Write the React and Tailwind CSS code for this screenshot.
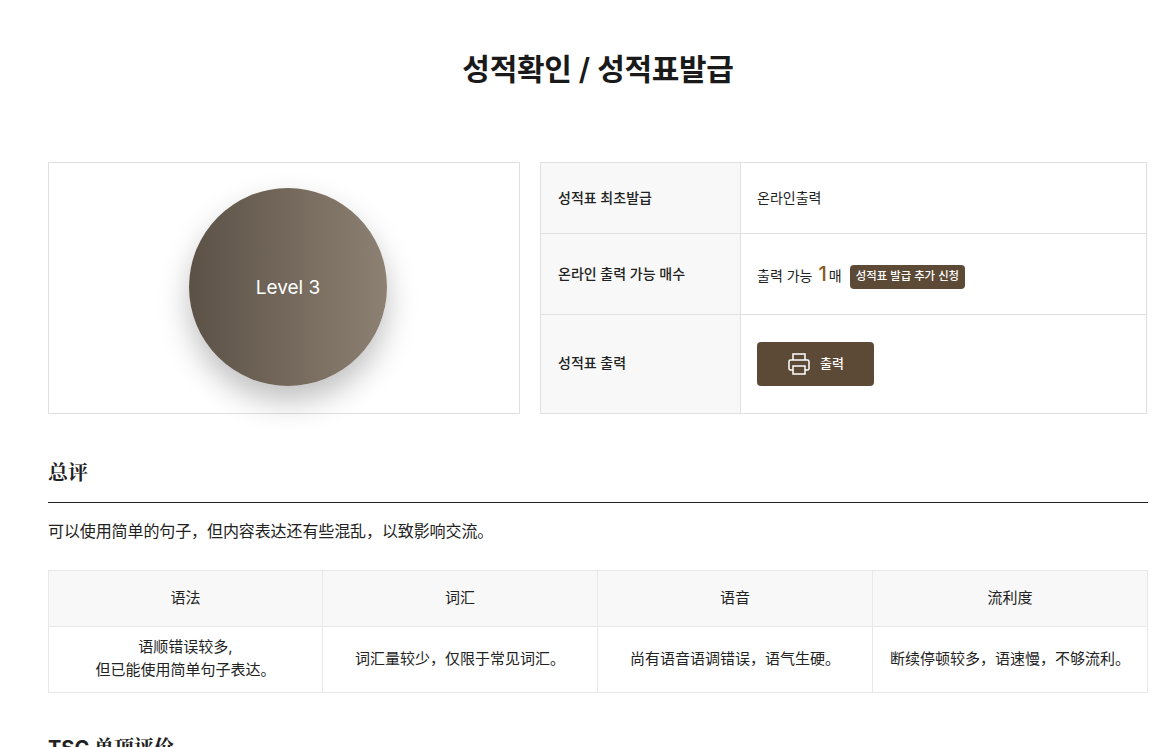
import React from 'react';

const font = "font-['Inter','Noto_Sans_CJK_KR','Noto_Sans_CJK_SC',sans-serif]";
const zh = "font-['Inter','Noto_Sans_CJK_SC',sans-serif]";

const InfoRow = ({ label, height, last, labelClass = 'pb-[2px]', children }) => (
  <div className={`flex ${height} ${last ? '' : 'border-b border-[#e0e0e0]'}`}>
    <div className={`w-[200px] shrink-0 flex items-center pl-[17px] ${labelClass} bg-[#f8f8f8] border-r border-[#e0e0e0] text-[14px] font-medium text-[#222]`}>
      {label}
    </div>
    <div className="flex-1 flex items-center pl-[16px] text-[14px] text-[#222]">{children}</div>
  </div>
);

const PrinterIcon = () => (
  <svg width="24" height="24" viewBox="0 0 24 24" fill="none" stroke="#fff" strokeWidth="1.5">
    <path d="M6 8V2h12v6" />
    <path d="M6 18H3.500A1.500 1.500 0 0 1 2 16.500V9.500A1.500 1.500 0 0 1 3.500 8h17A1.500 1.500 0 0 1 22 9.500v7a1.500 1.500 0 0 1-1.500 1.500H18" />
    <rect x="6" y="14" width="12" height="8" />
    <path d="M18.500 11h.01" />
  </svg>
);

const scores = [
  { title: '语法', body: <>语顺错误较多,<br />但已能使用简单句子表达。</> },
  { title: '词汇', body: '词汇量较少，仅限于常见词汇。' },
  { title: '语音', body: '尚有语音语调错误，语气生硬。' },
  { title: '流利度', body: '断续停顿较多，语速慢，不够流利。' },
];

const App = () => {
  return (
    <div className={`${font} h-[747px] overflow-hidden bg-white text-[#111] pl-[48px] pr-[16px]`}>
      {/* Title */}
      <h1 className="pt-[49px] h-[162px] text-center text-[30px] leading-[40px] tracking-[-0.3px] font-semibold text-[#1a1a1a]">
        성적확인 / 성적표발급
      </h1>

      {/* Level + info */}
      <div className="flex gap-[20px] w-[1099px]">
        <div className="w-[472px] h-[252px] border border-[#e0e0e0] flex items-center justify-center">
          <div className="ml-[8px] mb-[2px] pt-[2px] w-[198px] h-[198px] rounded-full bg-gradient-to-r from-[#5c5146] to-[#8c8172] shadow-[0_15px_30px_rgba(0,0,0,0.25)] flex items-center justify-center text-white text-[19px]">
            Level 3
          </div>
        </div>

        <div className="flex-1 h-[252px] border border-[#e0e0e0] flex flex-col">
          <InfoRow label="성적표 최초발급" height="h-[71px]">
            <span className="mb-[2px]">온라인출력</span>
          </InfoRow>
          <InfoRow label="온라인 출력 가능 매수" height="h-[81px]">
            <span className="mt-[2px]">출력 가능</span>
            <span className="ml-[6px] text-[20px] leading-[24px] font-medium text-[#8a5a20]">1</span>
            <span className="ml-[2px] mt-[2px]">매</span>
            <span className="ml-[8px] mt-[6px] h-[24px] px-[6px] rounded-[4px] bg-[#5c4a36] text-white text-[11.4px] font-medium flex items-center">
              성적표 발급 추가 신청
            </span>
          </InfoRow>
          <InfoRow label="성적표 출력" last labelClass="pb-[4px]" height="flex-1">
            <button className="w-[117px] h-[44px] rounded-[4px] bg-[#5c4a36] text-white text-[13px] font-medium flex items-center justify-center gap-[9px]">
              <PrinterIcon />
              출력
            </button>
          </InfoRow>
        </div>
      </div>

      {/* Summary */}
      <h2 className="mt-[44px] pt-[1px] h-[45px] w-[1100px] border-b border-[#222] text-[20px] leading-[26px] font-bold font-['Noto_Serif_CJK_SC',serif] text-[#222]">
        总评
      </h2>
      <p className={`${zh} mt-[17px] text-[16px] leading-[22px] tracking-[-0.1px] text-[#222]`}>
        可以使用简单的句子，但内容表达还有些混乱，以致影响交流。
      </p>

      {/* Score table */}
      <div className={`${zh} mt-[28px] w-[1100px] border border-[#e8e8e8] grid grid-cols-[274px_275px_275px_1fr] text-[15px] text-[#222]`}>
        {scores.map((s, i) => (
          <div
            key={s.title}
            className={`h-[56px] pb-[1px] flex items-center justify-center bg-[#f8f8f8] border-b border-[#e8e8e8] ${i < 3 ? 'border-r' : ''}`}
          >
            {s.title}
          </div>
        ))}
        {scores.map((s, i) => (
          <div
            key={s.title}
            className={`h-[65px] pb-[3px] flex items-center justify-center text-center leading-[23px] border-[#e8e8e8] ${i < 3 ? 'border-r' : ''}`}
          >
            <div>{s.body}</div>
          </div>
        ))}
      </div>

      <h2 className="mt-[41px] text-[20px] leading-[28px] font-bold text-[#222] font-['Inter','Noto_Serif_CJK_SC',serif]">
        TSC 单项评价
      </h2>
    </div>
  );
};

export default App;
